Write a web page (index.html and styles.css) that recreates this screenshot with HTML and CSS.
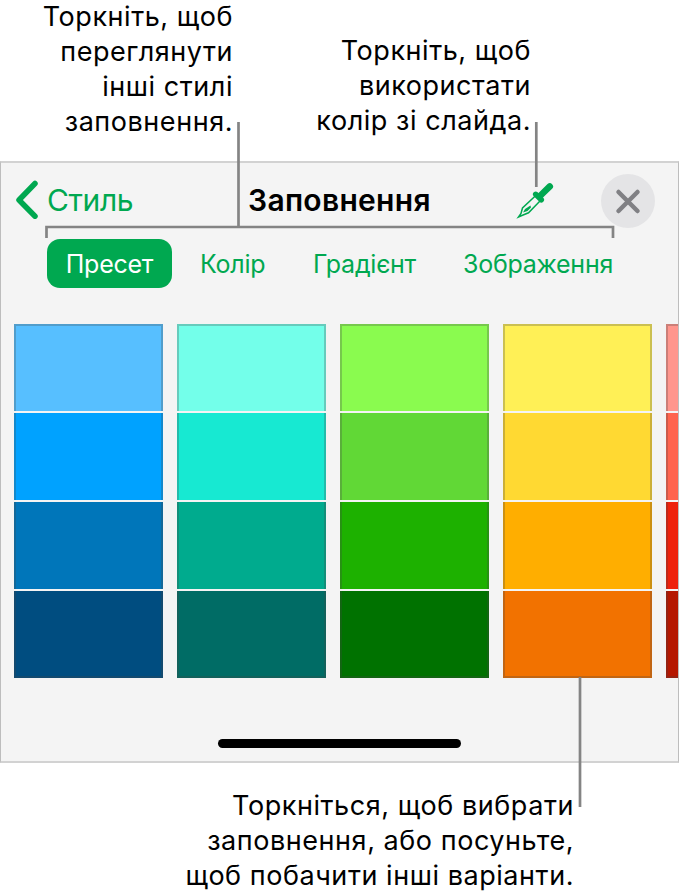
FILE: index.html
```html
<!DOCTYPE html>
<html lang="uk">
<head>
    <meta charset="UTF-8">
    <title>Заповнення</title>
    <link rel="stylesheet" href="styles.css">
</head>
<body>
    <div class="figure">
        <div class="captions-top">
            <p class="caption caption-styles">Торкніть, щоб<br>переглянути<br>інші стилі<br>заповнення.</p>
            <p class="caption caption-picker">Торкніть, щоб<br>використати<br>колір зі слайда.</p>
        </div>

        <div class="panel">
            <div class="panel-header">
                <a class="back">
                    <svg class="back-icon" width="24" height="40" viewBox="0 0 24 40">
                        <path d="M21 2.5 L5 19 L21 35.2" />
                    </svg>
                    <span class="back-label">Стиль</span>
                </a>
                <h1 class="title">Заповнення</h1>
                <svg class="picker-icon" width="36" height="36" viewBox="0 0 36 36">
                    <path class="picker-bulb" d="M22 13 L31.8 3.4" />
                    <path class="picker-collar" d="M17.7 11.3 L23.3 16.8" />
                    <path class="picker-glass" d="M17 13.2 L4.5 25 L3 30.5 L0.5 34 L4.5 32.3 L10.5 29.8 L22 18" />
                    <path class="picker-drop" d="M5 29.5 L7 26 L12.5 22.5 L13 24.5 L9.5 28 Z" />
                </svg>
                <button type="button" class="close">
                    <svg width="54" height="54" viewBox="0 0 54 54">
                        <path d="M17.5 18 L36.5 37 M36.5 18 L17.5 37" />
                    </svg>
                </button>
            </div>

            <div class="tabs">
                <span class="tab active">Пресет</span>
                <span class="tab tab-color">Колір</span>
                <span class="tab tab-gradient">Градієнт</span>
                <span class="tab tab-image">Зображення</span>
            </div>

            <div class="swatches">
                <div class="column">
                    <div class="swatch blue-1"></div>
                    <div class="swatch blue-2"></div>
                    <div class="swatch blue-3"></div>
                    <div class="swatch blue-4"></div>
                </div>
                <div class="column">
                    <div class="swatch teal-1"></div>
                    <div class="swatch teal-2"></div>
                    <div class="swatch teal-3"></div>
                    <div class="swatch teal-4"></div>
                </div>
                <div class="column">
                    <div class="swatch green-1"></div>
                    <div class="swatch green-2"></div>
                    <div class="swatch green-3"></div>
                    <div class="swatch green-4"></div>
                </div>
                <div class="column">
                    <div class="swatch yellow-1"></div>
                    <div class="swatch yellow-2"></div>
                    <div class="swatch yellow-3"></div>
                    <div class="swatch yellow-4"></div>
                </div>
                <div class="column">
                    <div class="swatch red-1"></div>
                    <div class="swatch red-2"></div>
                    <div class="swatch red-3"></div>
                    <div class="swatch red-4"></div>
                </div>
            </div>

            <div class="home-bar"></div>
        </div>

        <p class="caption caption-swatch">Торкніться, щоб вибрати<br>заповнення, або посуньте,<br>щоб побачити інші варіанти.</p>

        <!-- callout lines -->
        <svg class="callouts" width="681" height="896" viewBox="0 0 681 896">
            <path d="M238.5 122 V227" />
            <path d="M46.5 238 V227 H613 V238" />
            <path d="M536.3 122 V187" />
            <path d="M580 677 V807" />
        </svg>
    </div>
</body>
</html>
```
FILE: styles.css
```css
body {
    margin: 0;
    background-color: #fff;
    color: #000;
    font-family: Inter, "Liberation Sans", sans-serif;
}

.figure {
    position: relative;
    width: 681px;
    height: 896px;
    overflow: hidden;
}

.captions-top {
    display: flex;
    height: 161px;
}

.caption {
    margin: 0;
    font-size: 27px;
    line-height: 35px;
    letter-spacing: 0.55px;
    text-align: right;
    white-space: nowrap;
}

.caption-styles {
    width: 233px;
    margin-top: -1px;
}

.caption-picker {
    width: 298px;
    margin-top: 33px;
}

.caption-swatch {
    width: 574px;
    margin-top: 25px;
}

.panel {
    box-sizing: border-box;
    width: 679px;
    height: 602px;
    border: 1px solid #bdbdbd;
    border-top: 2px solid #d2d2d2;
    border-bottom: 2px solid #d2d2d2;
    background-color: #f4f4f4;
    overflow: hidden;
}

.panel-header {
    display: flex;
    align-items: center;
    height: 75px;
    padding-left: 13px;
}

.back {
    display: flex;
    align-items: center;
    width: 234px;
    color: #00a850;
}

.back-icon {
    overflow: visible;
    fill: none;
    stroke: #00a850;
    stroke-width: 5.5;
    stroke-linecap: round;
    stroke-linejoin: round;
}

.back-label {
    margin-left: 9px;
    font-size: 30px;
    letter-spacing: -0.4px;
    line-height: 36px;
    padding-bottom: 2px;
}

.title {
    width: 270px;
    margin: 0;
    padding-bottom: 2px;
    font-size: 30px;
    font-weight: 600;
    letter-spacing: 0.3px;
}

.picker-icon {
    overflow: visible;
    fill: none;
    stroke: #00a850;
}

.picker-bulb {
    stroke-width: 6.5;
    stroke-linecap: round;
}

.picker-collar {
    stroke-width: 5.5;
    stroke-linecap: round;
}

.picker-glass {
    stroke-width: 1.5;
}

.picker-drop {
    fill: #00a850;
    stroke: none;
}

.close {
    width: 54px;
    height: 54px;
    margin-left: 47px;
    padding: 0;
    border: none;
    border-radius: 50%;
    background-color: #e4e4e6;
}

.close svg {
    display: block;
    fill: none;
    stroke: #808084;
    stroke-width: 4.5;
    stroke-linecap: round;
}

.tabs {
    display: flex;
    height: 49px;
    margin-top: 1px;
    padding-left: 46px;
    color: #00a850;
    font-size: 25px;
    line-height: 50px;
    letter-spacing: -0.25px;
    white-space: nowrap;
}

.active {
    width: 125px;
    border-radius: 13px;
    background-color: #00a850;
    color: #fff;
    text-align: center;
}

.tab-color {
    width: 113px;
    margin-left: 28px;
}

.tab-gradient {
    width: 150px;
}

.swatches {
    display: flex;
    gap: 14px;
    margin-top: 36px;
    padding-left: 13px;
}

.column {
    display: grid;
    flex: none;
    grid-template-rows: repeat(4, 87px);
    gap: 2px;
    width: 149px;
}

.swatch {
    border: solid rgba(70, 70, 70, 0.28);
    border-width: 0 2px;
}

.swatch:first-child {
    border-top-width: 2px;
}

.swatch:last-child {
    border-bottom-width: 2px;
}

.blue-1 { background-color: #57bfff; }
.blue-2 { background-color: #00a2ff; }
.blue-3 { background-color: #0076ba; }
.blue-4 { background-color: #004d80; }

.teal-1 { background-color: #73ffea; }
.teal-2 { background-color: #17e9d2; }
.teal-3 { background-color: #00ab8e; }
.teal-4 { background-color: #006c65; }

.green-1 { background-color: #8afb4f; }
.green-2 { background-color: #61d836; }
.green-3 { background-color: #1db100; }
.green-4 { background-color: #007200; }

.yellow-1 { background-color: #fff056; }
.yellow-2 { background-color: #ffd932; }
.yellow-3 { background-color: #ffae00; }
.yellow-4 { background-color: #f27200; }

.red-1 { background-color: #ff968d; }
.red-2 { background-color: #ff644e; }
.red-3 { background-color: #ee220c; }
.red-4 { background-color: #b51700; }

.home-bar {
    width: 243px;
    height: 9px;
    margin: 61px 0 0 217px;
    border-radius: 5px;
    background-color: #000;
}

.callouts {
    position: absolute;
    top: 0;
    left: 0;
    fill: none;
    stroke: #848484;
    stroke-width: 2.7;
    pointer-events: none;
}
```
